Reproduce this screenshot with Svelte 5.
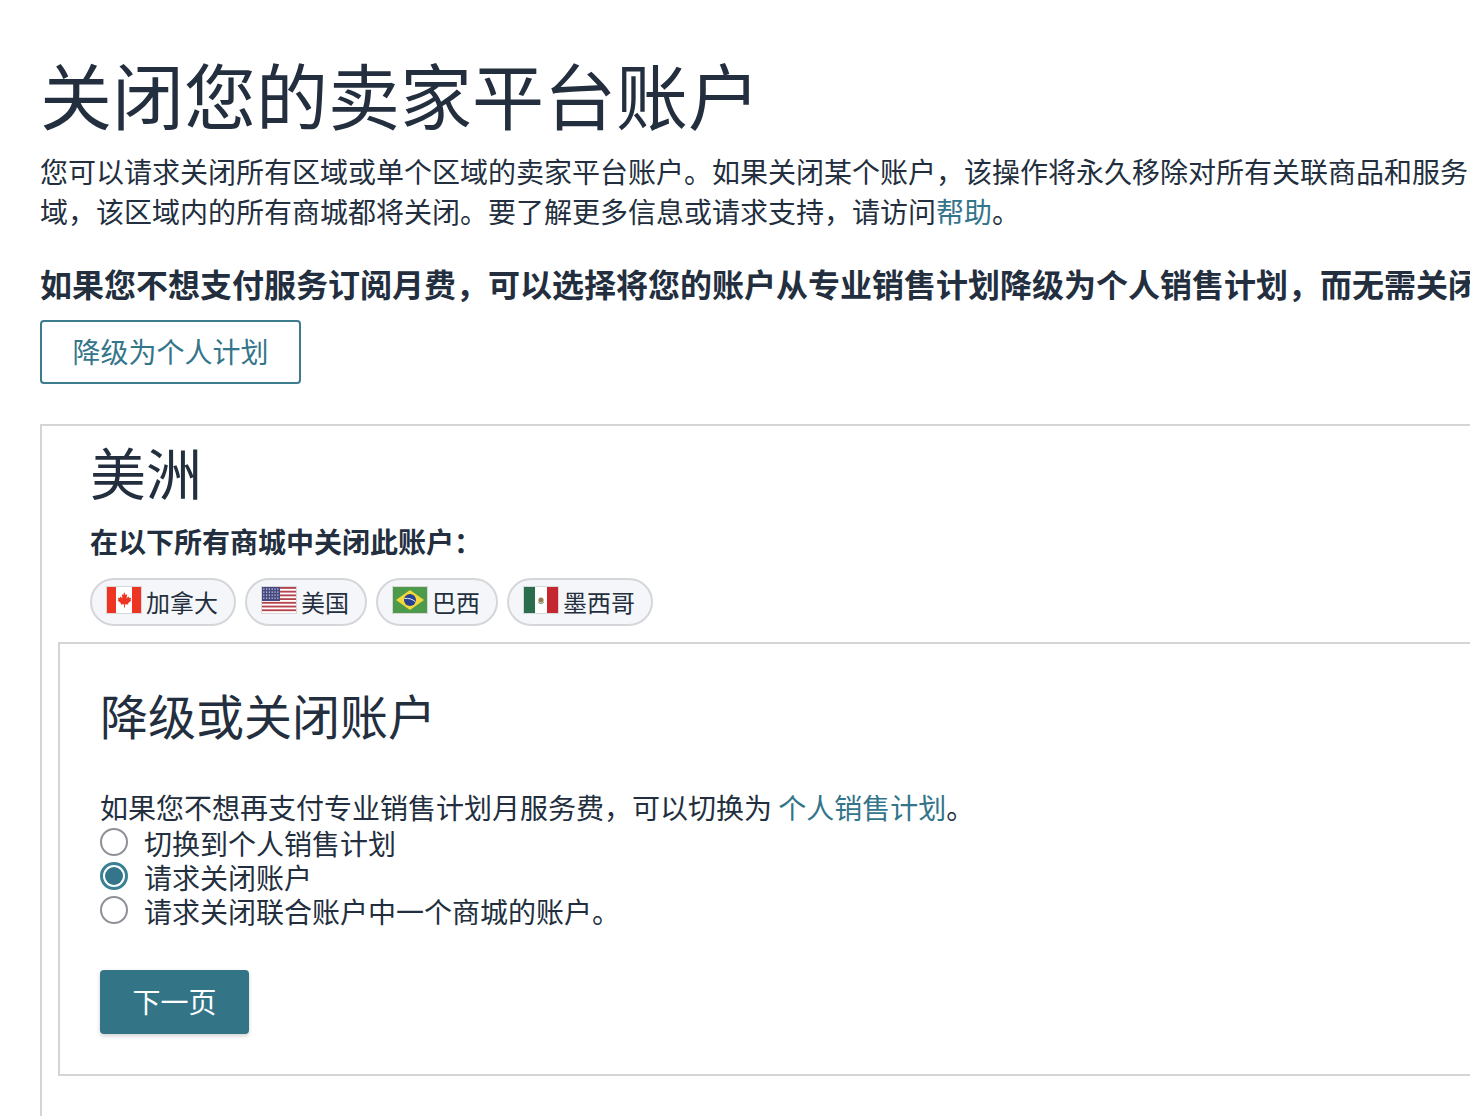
<script lang="ts">
	const options = [
		{ label: '切换到个人销售计划', checked: false },
		{ label: '请求关闭账户', checked: true },
		{ label: '请求关闭联合账户中一个商城的账户。', checked: false }
	];
</script>

<div class="page">
	<h1>关闭您的卖家平台账户</h1>
	<p class="intro">
		您可以请求关闭所有区域或单个区域的卖家平台账户。如果关闭某个账户&#65292;该操作将永久移除对所有关联商品和服务的访问权限。如果关闭某个区<br />域&#65292;该区域内的所有商城都将关闭。要了解更多信息或请求支持&#65292;请访问<a href="#help">帮助</a>。
	</p>
	<p class="notice">如果您不想支付服务订阅月费&#65292;可以选择将您的账户从专业销售计划降级为个人销售计划&#65292;而无需关闭账户。</p>
	<button class="outline">降级为个人计划</button>

	<section class="region">
		<h2>美洲</h2>
		<p class="sub">在以下所有商城中关闭此账户&#65306;</p>
		<ul class="chips">
			<li>
				<svg class="flag" viewBox="0 0 36 28">
					<rect width="36" height="28" fill="#d8d8dc" />
					<rect x="1" y="1" width="34" height="26" fill="#fff" />
					<rect x="1" y="1" width="9" height="26" fill="#ee3524" />
					<rect x="26" y="1" width="9" height="26" fill="#ee3524" />
					<path d="M18 6l1.600 3 1.600-.8-.6 4 2-1.600.6 1.400 2-.3-.7 2.200.9.6-3.400 2.800.4 1.300-3.500-.4.100 3.300h-1l.100-3.300-3.500.4.400-1.300-3.400-2.800.9-.6-.7-2.200 2 .3.600-1.400 2 1.600-.6-4 1.600.8z" fill="#ee3524" />
				</svg>
				加拿大
			</li>
			<li>
				<svg class="flag" viewBox="0 0 36 28">
					<rect width="36" height="28" fill="#d8d8dc" />
					<rect x="1" y="1" width="34" height="26" fill="#fff" />
					{#each [0, 1, 2, 3, 4, 5, 6] as i}
						<rect x="1" y={1 + i * 3.72} width="34" height="1.860" fill="#b5444f" />
					{/each}
					<rect x="1" y="1" width="18" height="14" fill="#474a80" />
					{#each [0, 1, 2, 3] as r}
						{#each [0, 1, 2, 3, 4, 5] as c}
							<rect x={2.200 + c * 2.800} y={2.500 + r * 3} width="1.200" height="1.200" fill="#d6d8ea" />
						{/each}
					{/each}
				</svg>
				美国
			</li>
			<li>
				<svg class="flag" viewBox="0 0 36 28">
					<rect width="36" height="28" fill="#d8d8dc" />
					<rect x="1" y="1" width="34" height="26" fill="#4d9a4a" />
					<path d="M18 4l14 10-14 10L4 14z" fill="#f4d83a" />
					<circle cx="18" cy="14" r="6" fill="#27408f" />
					<path d="M12.500 12.500c4-.6 8 .6 11 3.300" stroke="#e8eef5" stroke-width="1" fill="none" />
				</svg>
				巴西
			</li>
			<li>
				<svg class="flag" viewBox="0 0 36 28">
					<rect width="36" height="28" fill="#d8d8dc" />
					<rect x="1" y="1" width="34" height="26" fill="#fff" />
					<rect x="1" y="1" width="11" height="26" fill="#2a6e4d" />
					<rect x="24" y="1" width="11" height="26" fill="#c4272f" />
					<circle cx="18" cy="14" r="2.600" fill="#9a7a4f" />
					<path d="M15 16c1.500 2 4.500 2 6 0" stroke="#5f8f60" stroke-width="1" fill="none" />
				</svg>
				墨西哥
			</li>
		</ul>

		<div class="panel">
			<h3>降级或关闭账户</h3>
			<p class="lead">如果您不想再支付专业销售计划月服务费&#65292;可以切换为 <a href="#plan">个人销售计划</a>。</p>
			<div class="options">
				{#each options as option}
					<label class="option">
						<span class="radio" class:checked={option.checked}></span>
						<span class="option-label">{option.label}</span>
					</label>
				{/each}
			</div>
			<button class="primary">下一页</button>
		</div>
	</section>
</div>

<style>
	:global(body) {
		margin: 0;
		overflow: hidden;
		background: #fff;
	}

	.page {
		width: 1700px;
		height: 1116px;
		box-sizing: border-box;
		padding: 53px 0 0 40px;
		font-family: 'Noto Sans CJK SC', 'Liberation Sans', sans-serif;
		font-size: 28px;
		line-height: 40px;
		color: #232f3e;
		overflow: hidden;
	}

	h1 {
		margin: 0 0 18px;
		font-size: 72px;
		line-height: 80px;
		font-weight: 400;
	}

	.intro {
		margin: 0;
		white-space: nowrap;
	}

	a {
		color: #33758a;
		text-decoration: none;
	}

	.notice {
		margin: 32px 0 0;
		font-size: 32px;
		font-weight: 700;
		white-space: nowrap;
	}

	.outline {
		display: block;
		margin-top: 17px;
		width: 261px;
		height: 64px;
		padding: 0 0 2px;
		border: 2px solid #3d7c8f;
		border-radius: 4px;
		background: #fff;
		color: #33758a;
		font: inherit;
	}

	.region {
		margin-top: 40px;
		height: 800px;
		box-sizing: border-box;
		padding: 0 0 0 16px;
		border: 2px solid #d5d5d5;
		border-width: 2px 0 0 2px;
	}

	h2 {
		margin: 0 0 0 32px;
		padding-top: 10px;
		font-size: 56px;
		line-height: 70px;
		font-weight: 400;
	}

	.sub {
		margin: 15px 0 0 32px;
		font-weight: 700;
		line-height: 40px;
	}

	.chips {
		display: flex;
		gap: 9px;
		list-style: none;
		margin: 17px 0 0 32px;
		padding: 0;
	}

	.chips li {
		display: flex;
		align-items: center;
		gap: 4px;
		height: 48px;
		box-sizing: border-box;
		padding: 0 16px 0 14px;
		border: 2px solid #d5d6da;
		border-radius: 24px;
		background: #f5f6f9;
		font-size: 24px;
		line-height: 32px;
	}

	.flag {
		display: block;
		width: 36px;
		height: 28px;
		margin-top: -5px;
	}

	.panel {
		margin-top: 16px;
		height: 434px;
		box-sizing: border-box;
		padding: 38px 0 0 40px;
		border: 2px solid #d5d5d5;
	}

	h3 {
		margin: 0;
		font-size: 48px;
		line-height: 64px;
		font-weight: 400;
	}

	.lead {
		margin: 44px 0 1px;
		line-height: 34px;
	}

	.options {
		display: flex;
		flex-direction: column;
	}

	.option {
		display: flex;
		align-items: center;
		gap: 16px;
		height: 34px;
		line-height: 34px;
	}

	.option-label {
		padding-top: 2px;
	}

	.radio {
		width: 28px;
		height: 28px;
		box-sizing: border-box;
		border: 2px solid #8d9096;
		border-radius: 50%;
		background: #fff;
	}

	.radio.checked {
		border: 3px solid #3a8096;
		padding: 2px;
		background: #33758a content-box;
	}

	.primary {
		display: block;
		margin-top: 43px;
		width: 149px;
		height: 64px;
		padding: 0 0 2px;
		border: 0;
		border-radius: 4px;
		background: #347487;
		box-shadow: 0 2px 4px rgba(0, 0, 0, 0.18);
		color: #fff;
		font: inherit;
	}
</style>
